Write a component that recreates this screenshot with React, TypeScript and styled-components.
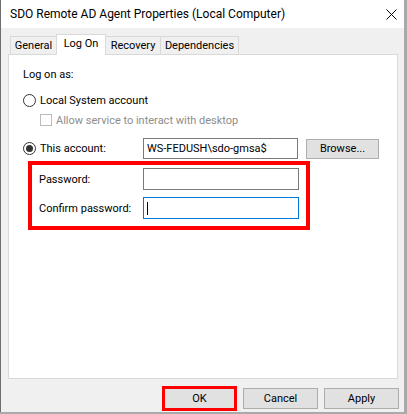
import React from "react";
import styled, { createGlobalStyle } from "styled-components";

const GlobalStyle = createGlobalStyle`
  html, body {
    margin: 0;
    padding: 0;
    background: #a9a9a9;
  }
  body {
    font-family: "Roboto", "Liberation Sans", sans-serif;
    font-size: 11px;
    color: #000000;
  }
`;

const App = () => {
  return (
    <>
      <GlobalStyle />
      <Window>
        <TitleBar>
          <Title>SDO Remote AD Agent Properties (Local Computer)</Title>
          <CloseButton>
            <svg width="11" height="11" viewBox="0 0 11 11">
              <path d="M0.5 0.5 L10.5 10.5 M10.5 0.5 L0.5 10.5" stroke="#000" strokeWidth="1" />
            </svg>
          </CloseButton>
        </TitleBar>
        <Body>
          <TabStrip>
            <Tab $w={47}>General</Tab>
            <Tab $w={50} $active>
              Log On
            </Tab>
            <Tab $w={56}>Recovery</Tab>
            <Tab $w={79}>Dependencies</Tab>
          </TabStrip>
          <Panel>
            <Caption>Log on as:</Caption>
            <OptionRow $top={9}>
              <Radio />
              <span>Local System account</span>
            </OptionRow>
            <CheckRow>
              <Checkbox />
              <span>Allow service to interact with desktop</span>
            </CheckRow>
            <AccountRow>
              <AccountLabel>
                <Radio $checked />
                <span>This account:</span>
              </AccountLabel>
              <TextField $w={155} $h={21}>
                WS-FEDUSH\sdo-gmsa$
              </TextField>
              <Button $w={73} $h={20}>
                Browse...
              </Button>
            </AccountRow>
            <Highlight>
              <FieldRow>
                <FieldLabel>Password:</FieldLabel>
                <TextField $w={156} $h={22} />
              </FieldRow>
              <FieldRow>
                <FieldLabel>Confirm password:</FieldLabel>
                <TextField $w={156} $h={22} $focused>
                  <Caret />
                </TextField>
              </FieldRow>
            </Highlight>
          </Panel>
          <ButtonBar>
            <Button $w={75} $h={25} $marked>
              OK
            </Button>
            <Button $w={75} $h={21}>
              Cancel
            </Button>
            <Button $w={75} $h={21}>
              Apply
            </Button>
          </ButtonBar>
        </Body>
      </Window>
    </>
  );
};

export default App;

/** 창 전체 */
const Window = styled.div`
  display: flex;
  flex-direction: column;

  width: 403px;
  height: 412px;

  border-left: 1px solid #6e6e6e;
  background: #f0f0f0;
`;

const TitleBar = styled.div`
  display: flex;
  align-items: center;
  justify-content: space-between;

  height: 28px;
  padding-left: 9px;

  background: #ffffff;
`;
const Title = styled.span`
  font-size: 12px;
  color: #000000;
`;
const CloseButton = styled.div`
  display: flex;
  align-items: center;
  justify-content: center;

  width: 24px;
  height: 28px;
  margin-right: 1px;
`;

/** 탭 + 본문 */
const Body = styled.div`
  display: flex;
  flex-direction: column;
  flex: 1;

  padding: 7px 6px 0 7px;
`;
const TabStrip = styled.div`
  display: flex;
  align-items: flex-end;

  height: 20px;
  padding-left: 2px;
  margin-bottom: -1px;
  position: relative;
  z-index: 1;
`;
const Tab = styled.div<{ $w: number; $active?: boolean }>`
  display: flex;
  align-items: center;
  justify-content: center;
  box-sizing: border-box;

  width: ${(p) => p.$w}px;
  height: ${(p) => (p.$active ? 21 : 19)}px;
  margin-left: -1px;

  border: 1px solid #d9d9d9;
  border-bottom: ${(p) => (p.$active ? "1px solid #ffffff" : "1px solid #d9d9d9")};
  background: ${(p) => (p.$active ? "#ffffff" : "#f0f0f0")};
  padding-bottom: ${(p) => (p.$active ? 2 : 0)}px;

  &:first-child {
    margin-left: 0;
  }
`;

const Panel = styled.div`
  display: flex;
  flex-direction: column;
  box-sizing: border-box;

  height: 325px;
  padding: 12px 0 0 14px;

  border: 1px solid #d9d9d9;
  background: #ffffff;
`;
const Caption = styled.div`
  line-height: 16px;
`;
const OptionRow = styled.div<{ $top: number }>`
  display: flex;
  align-items: center;
  gap: 4px;

  height: 16px;
  margin-top: ${(p) => p.$top}px;
`;
const Radio = styled.span<{ $checked?: boolean }>`
  display: inline-flex;
  align-items: center;
  justify-content: center;
  box-sizing: border-box;

  width: 13px;
  height: 13px;

  border: 1px solid #333333;
  border-radius: 50%;
  background: #ffffff;

  &::after {
    content: "";
    display: ${(p) => (p.$checked ? "block" : "none")};
    width: 7px;
    height: 7px;
    border-radius: 50%;
    background: #333333;
  }
`;
const CheckRow = styled.div`
  display: flex;
  align-items: center;
  gap: 4px;

  height: 16px;
  margin-top: 4px;
  margin-left: 17px;

  color: #8d8d8d;
`;
const Checkbox = styled.span`
  box-sizing: border-box;
  width: 12px;
  height: 12px;

  border: 1px solid #bcbcbc;
  background: #ffffff;
`;
const AccountRow = styled.div`
  display: flex;
  align-items: center;
  gap: 8px;

  margin-top: 10px;
`;
const AccountLabel = styled.div`
  display: flex;
  align-items: center;
  gap: 4px;

  width: 112px;
`;
const TextField = styled.div<{ $w: number; $h: number; $focused?: boolean }>`
  display: flex;
  align-items: center;
  box-sizing: border-box;

  width: ${(p) => p.$w}px;
  height: ${(p) => p.$h}px;
  padding-left: 3px;

  border: 1px solid ${(p) => (p.$focused ? "#0078d7" : "#7a7a7a")};
  background: #ffffff;
`;
const Caret = styled.span`
  width: 1px;
  height: 13px;
  background: #000000;
`;
const Button = styled.div<{ $w: number; $h: number; $marked?: boolean }>`
  display: flex;
  align-items: center;
  justify-content: center;
  box-sizing: border-box;

  width: ${(p) => p.$w}px;
  height: ${(p) => p.$h}px;

  border: ${(p) => (p.$marked ? "3px solid #ff0000" : "1px solid #adadad")};
  background: #e1e1e1;
`;

/** 빨간 강조 박스 (비밀번호 영역) */
const Highlight = styled.div`
  display: flex;
  flex-direction: column;
  gap: 7px;
  box-sizing: border-box;

  width: 282px;
  margin-top: 2px;
  margin-left: 5px;
  padding: 3px 7px 7px 7px;

  border: 4px solid #ff0000;
`;
const FieldRow = styled.div`
  display: flex;
  align-items: center;
`;
const FieldLabel = styled.span`
  width: 104px;
`;

const ButtonBar = styled.div`
  display: flex;
  align-items: center;
  justify-content: flex-end;
  gap: 6px;

  margin-top: 7px;
  margin-right: -1px;
`;
